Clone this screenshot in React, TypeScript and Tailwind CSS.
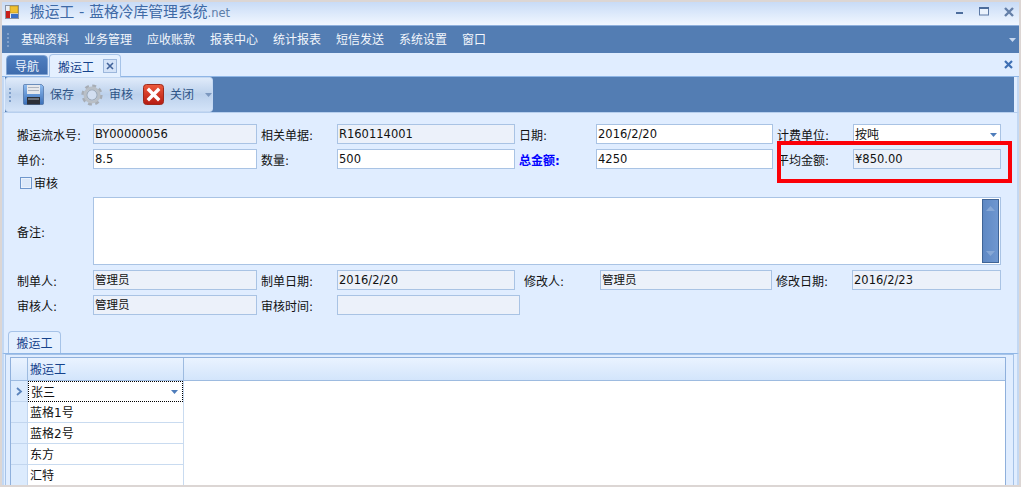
import React from "react";

const font = { fontFamily: '"DejaVu Sans","Noto Sans CJK SC",sans-serif' };

function Label({ text, w, pl = 0, blue }: { text: string; w: number; pl?: number; blue?: boolean }) {
  return (
    <div
      className={`flex h-full shrink-0 items-center pt-[3px] text-[12px] ${blue ? "font-bold text-[#0000ff]" : "text-[#111111]"}`}
      style={{ width: w, paddingLeft: pl }}
    >
      {text}
    </div>
  );
}

function Input({ value, w, ro, children }: { value?: string; w: number; ro?: boolean; children?: React.ReactNode }) {
  return (
    <div
      className={`flex h-full shrink-0 items-center border border-[#a9c3e4] pl-[1px] pt-[2px] text-[11.5px] text-[#111111] ${ro ? "bg-[#ecf1fa]" : "bg-white"}`}
      style={{ width: w }}
    >
      {value}
      {children}
    </div>
  );
}

function Row({ children }: { children: React.ReactNode }) {
  return <div className="flex h-[20px] items-center">{children}</div>;
}

function Tri({ color = "#4f7dbb" }: { color?: string }) {
  return (
    <svg width="7" height="4" viewBox="0 0 7 4">
      <path d="M0 0h7L3.5 4z" fill={color} />
    </svg>
  );
}

function Grip() {
  return (
    <div className="flex flex-col gap-[2px]">
      {[0, 1, 2, 3].map((i) => (
        <div key={i} className="h-[2px] w-[2px] bg-[#7f9fca]" />
      ))}
    </div>
  );
}

function AppIcon() {
  return (
    <svg width="14" height="14" viewBox="0 0 14 14">
      <rect x="0.5" y="0.5" width="13" height="13" fill="#e8eef6" stroke="#8a94a4" />
      <rect x="5" y="1" width="8" height="7" fill="#f0c030" stroke="#a8861c" strokeWidth="0.6" />
      <rect x="1" y="6" width="4" height="7" fill="#c8201a" />
      <rect x="6" y="9" width="7" height="4" fill="#3a70c8" />
    </svg>
  );
}

function Floppy() {
  return (
    <svg width="21" height="21" viewBox="0 0 21 21">
      <defs>
        <linearGradient id="fl" x1="0" y1="0" x2="0" y2="1">
          <stop offset="0" stopColor="#8fbcf0" />
          <stop offset="1" stopColor="#3a6fb8" />
        </linearGradient>
      </defs>
      <path d="M1.5.5h17l2 2v17a1 1 0 0 1-1 1h-18a1 1 0 0 1-1-1v-18a1 1 0 0 1 1-1z" fill="url(#fl)" stroke="#3a5f96" strokeWidth="0.6" />
      <rect x="4" y="1" width="13" height="9" fill="#e6e8ec" />
      <rect x="5" y="3" width="11" height="1" fill="#aeb4bf" />
      <rect x="5" y="6" width="11" height="1" fill="#aeb4bf" />
      <rect x="4" y="13" width="13" height="7.5" fill="#2c2f36" />
      <rect x="5" y="14" width="11" height="2" fill="#6a6f78" />
    </svg>
  );
}

function Gear() {
  return (
    <svg width="22" height="24" viewBox="0 0 22 24">
      <circle cx="11" cy="12" r="8.6" fill="none" stroke="#a7adb5" strokeWidth="4" strokeDasharray="3.6 3.15" />
      <circle cx="11" cy="12" r="7" fill="none" stroke="#b9bfc6" strokeWidth="3" />
      <circle cx="11" cy="12" r="5" fill="none" stroke="#8d949c" strokeWidth="0.8" />
      <circle cx="11" cy="12" r="4.4" fill="#d2def0" />
    </svg>
  );
}

function RedX() {
  return (
    <svg width="21" height="21" viewBox="0 0 21 21">
      <defs>
        <linearGradient id="rx" x1="0" y1="0" x2="0" y2="1">
          <stop offset="0" stopColor="#ee5a3c" />
          <stop offset="1" stopColor="#b51a12" />
        </linearGradient>
      </defs>
      <rect x="0.5" y="0.5" width="20" height="20" rx="3" fill="url(#rx)" stroke="#9c2a1c" />
      <path d="M6 6l9 9M15 6l-9 9" stroke="#fff" strokeWidth="3.4" strokeLinecap="square" />
    </svg>
  );
}

const menus = ["基础资料", "业务管理", "应收账款", "报表中心", "统计报表", "短信发送", "系统设置", "窗口"];
const rows = ["蓝格1号", "蓝格2号", "东方", "汇特"];

export default function App() {
  return (
    <div className="relative h-[487px] w-[1021px] overflow-hidden bg-[#dcd6d4] pb-[2px] pl-[2px] pr-[2px] pt-[2px]" style={font}>
      <div className="flex h-full flex-col bg-[#e0edff]">
        {/* title bar */}
        <div className="flex h-[24px] shrink-0 items-center border-b border-[#8fb0dc] bg-linear-to-b from-[#c8dbf6] to-[#f1f7ff] pb-[4px]">
          <div className="ml-[3px] flex w-[25px] items-center">
            <AppIcon />
          </div>
          <div className="pt-[1px] text-[14.8px] leading-none text-[#3f6aa6]">
            搬运工 - 蓝格冷库管理系统<span className="text-[11.5px] text-[#5d7ea8]">.net</span>
          </div>
          <div className="ml-auto flex items-center gap-[15px] pr-[5px]">
            <svg width="9" height="9" viewBox="0 0 9 9">
              <rect x="1" y="5" width="7" height="2" fill="#4d6d9c" />
            </svg>
            <svg width="10" height="9" viewBox="0 0 10 9">
              <rect x="0.5" y="0.5" width="9" height="7.5" fill="#eaf2fd" stroke="#5f7ba6" />
              <rect x="0" y="0" width="10" height="2" fill="#4d6d9c" />
            </svg>
            <svg width="10" height="10" viewBox="0 0 10 10">
              <path d="M1 1l8 8M9 1l-8 8" stroke="#647fa8" strokeWidth="2.4" />
            </svg>
          </div>
        </div>

        {/* menu bar */}
        <div className="flex h-[27px] shrink-0 items-center bg-[#537db3] pl-[5px] pr-[3px]">
          <Grip />
          <div className="ml-[12px] flex gap-[15px] text-[12px] text-[#f2f6fc]">
            {menus.map((m) => (
              <span key={m}>{m}</span>
            ))}
          </div>
          <div className="ml-auto flex">
            <Tri color="#c7d8f0" />
          </div>
        </div>

        {/* document tabs */}
        <div className="flex h-[24px] shrink-0 items-end border-b border-[#8fb6e6] pl-[4px] pr-[6px]">
          <div className="mb-[1px] flex h-[20px] w-[42px] items-center justify-center rounded-t-[4px] border border-[#7fa3d2] bg-linear-to-b from-[#4f7fc0] to-[#3f6cad] pt-[3px] text-[12px] text-[#eef4fd]">
            导航
          </div>
          <div className="ml-[1px] -mb-[1px] flex h-[23px] w-[72px] items-center rounded-t-[4px] border border-b-0 border-[#a6c3e8] bg-[#e4f0ff] pl-[8px] text-[12px] text-[#15428b]">
            <span className="pt-[3px]">搬运工</span>
            <div className="ml-[9px] flex h-[14px] w-[14px] items-center justify-center border border-[#9cb7dc] bg-[#d4e3f8]">
              <svg width="8" height="8" viewBox="0 0 8 8">
                <path d="M1 1l6 6M7 1l-6 6" stroke="#42639a" strokeWidth="1.6" />
              </svg>
            </div>
          </div>
          <div className="mb-[7px] ml-auto flex">
            <svg width="9" height="9" viewBox="0 0 9 9">
              <path d="M1 1l7 7M8 1l-7 7" stroke="#3f70b4" strokeWidth="2.2" />
            </svg>
          </div>
        </div>

        {/* toolbar */}
        <div className="flex h-[35px] shrink-0 border-x-[2px] border-x-[#c3d8f3] pr-[3px] pl-[1px]">
          <div className="flex flex-1 bg-[#537db3]">
            <div className="flex w-[208px] items-center rounded-[3px] border border-[#c4d8f2] bg-linear-to-b from-[#e0ebfa] via-[#bcd1ec] to-[#d3e3f8] pl-[3px] text-[12px] text-[#2f5486]">
              <Grip />
              <div className="ml-[12px] flex">
                <Floppy />
              </div>
              <span className="ml-[6px] pt-[1px]">保存</span>
              <div className="ml-[7px] flex">
                <Gear />
              </div>
              <span className="ml-[6px] pt-[1px]">审核</span>
              <div className="ml-[10px] flex">
                <RedX />
              </div>
              <span className="ml-[6px] pt-[1px]">关闭</span>
              <div className="ml-[11px] flex">
                <Tri color="#7c98bf" />
              </div>
            </div>
          </div>
        </div>

        {/* form */}
        <div className="flex h-[213px] shrink-0 flex-col gap-[5px] border-x-[2px] border-t border-x-[#c3d8f3] border-t-[#b7cfee] pl-[13px] pt-[11px]">
          <Row>
            <Label text="搬运流水号:" w={76} />
            <Input value="BY00000056" w={164} ro />
            <Label text="相关单据:" w={80} pl={4} />
            <Input value="R160114001" w={178} ro />
            <Label text="日期:" w={81} pl={4} />
            <Input value="2016/2/20" w={177} />
            <Label text="计费单位:" w={80} pl={4} />
            <Input w={148}>
              <span className="text-[12px]">按吨</span>
              <span className="ml-auto mr-[3px] flex">
                <Tri />
              </span>
            </Input>
          </Row>
          <Row>
            <Label text="单价:" w={76} />
            <Input value="8.5" w={164} />
            <Label text="数量:" w={80} pl={4} />
            <Input value="500" w={178} />
            <Label text="总金额:" w={81} pl={4} blue />
            <Input value="4250" w={177} />
            <Label text="平均金额:" w={80} pl={4} />
            <Input value="¥850.00" w={148} ro />
          </Row>
          <div className="-my-[5px] flex h-[28px] items-start pl-[3px] pt-[7px] text-[12px] leading-[14px] text-[#111111]">
            <div className="mr-[2px] mt-[1px] h-[12px] w-[12px] border border-[#6f97cc] bg-[#eaf2fd] p-[1px]">
              <div className="h-full w-full bg-[#dbe8f9]" />
            </div>
            <span className="mt-[1px]">审核</span>
          </div>
          <div className="flex h-[68px] items-center">
            <Label text="备注:" w={76} />
            <div className="flex h-full w-[908px] shrink-0 justify-end border border-[#a9c3e4] bg-white p-[1px] pr-[1px]">
              <div className="flex w-[17px] flex-col items-center justify-between border border-[#3f6496] bg-linear-to-r from-[#5f89c4] to-[#6f97d0] py-[6px]">
                <svg width="9" height="5" viewBox="0 0 9 5">
                  <path d="M0 5h9L4.5 0z" fill="#87a8d6" />
                </svg>
                <svg width="9" height="5" viewBox="0 0 9 5">
                  <path d="M0 0h9L4.5 5z" fill="#87a8d6" />
                </svg>
              </div>
            </div>
          </div>
          <Row>
            <Label text="制单人:" w={76} />
            <Input value="管理员" w={164} ro />
            <Label text="制单日期:" w={80} pl={4} />
            <Input value="2016/2/20" w={178} ro />
            <Label text="修改人:" w={85} pl={9} />
            <Input value="管理员" w={172} ro />
            <Label text="修改日期:" w={80} pl={4} />
            <Input value="2016/2/23" w={149} ro />
          </Row>
          <Row>
            <Label text="审核人:" w={76} />
            <Input value="管理员" w={164} ro />
            <Label text="审核时间:" w={80} pl={4} />
            <Input w={183} ro />
          </Row>
        </div>

        {/* lower tab */}
        <div className="flex h-[28px] shrink-0 items-end border-x-[2px] border-x-[#c3d8f3] pl-[4px]">
          <div className="-mb-[1px] flex h-[23px] w-[53px] items-center justify-center rounded-t-[4px] border border-b-0 border-[#a6c3e8] bg-[#e4f0ff] pt-[2px] text-[12px] text-[#15428b]">
            搬运工
          </div>
        </div>

        {/* grid frame */}
        <div className="flex min-h-0 flex-1 flex-col border-x-[2px] border-t border-x-[#c3d8f3] border-t-[#8fb6e6] pb-0 pl-[1px] pr-[3px]">
          <div className="flex min-h-0 flex-1 flex-col border-x border-t border-[#a6c3e8] pl-[4px] pr-[7px] pt-[2px]">
            <div className="flex min-h-0 flex-1 flex-col overflow-hidden border-x border-t border-[#8fb0dc] bg-white">
              <div className="flex h-[23px] shrink-0 border-b border-[#9dbbe0] bg-linear-to-b from-[#eaf3ff] to-[#d3e5fb] text-[12px] text-[#15428b]">
                <div className="w-[17px] shrink-0 border-r border-[#9dbbe0]" />
                <div className="flex w-[156px] shrink-0 items-center border-r border-[#9dbbe0] pl-[2px] pt-[2px]">搬运工</div>
                <div className="flex-1" />
              </div>
              <div className="flex h-[21px] shrink-0 text-[12px] text-[#111111]">
                <div className="flex w-[17px] shrink-0 items-center justify-center border-b border-r border-[#c2d6ef] bg-[#dcebfd]">
                  <svg width="7" height="9" viewBox="0 0 7 9">
                    <path d="M1 1l4 3.5-4 3.5" fill="none" stroke="#5b84bc" strokeWidth="1.8" />
                  </svg>
                </div>
                <div className="flex w-[155px] shrink-0 items-center border border-dotted border-black pl-[2px]">
                  <span className="pt-[2px]">张三</span>
                  <span className="ml-auto mr-[4px] flex">
                    <Tri />
                  </span>
                </div>
                <div className="w-[1px] shrink-0 bg-[#c2d6ef]" />
              </div>
              {rows.map((r) => (
                <div key={r} className="flex h-[21px] shrink-0 text-[12px] text-[#111111]">
                  <div className="w-[17px] shrink-0 border-b border-r border-[#c2d6ef] bg-[#dcebfd]" />
                  <div className="flex w-[156px] shrink-0 items-center border-b border-r border-[#c9dbf0] pl-[2px] pt-[2px]">{r}</div>
                </div>
              ))}
            </div>
          </div>
        </div>
      </div>

      {/* annotation */}
      <div className="pointer-events-none absolute left-[777px] top-[141px] h-[42px] w-[235px] border-[4px] border-[#fb0007]" />
    </div>
  );
}
